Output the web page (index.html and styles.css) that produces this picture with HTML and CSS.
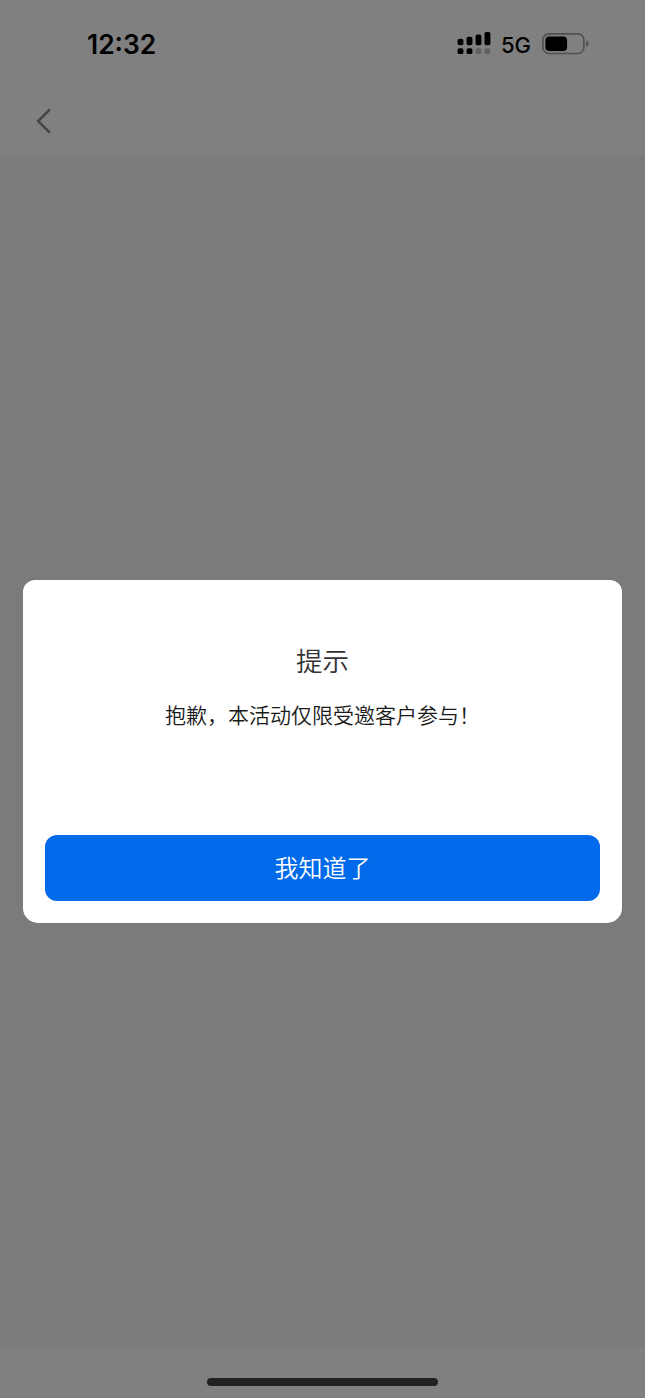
FILE: index.html
```html
<!DOCTYPE html>
<html lang="zh-CN">
<head>
<meta charset="utf-8">
<title>提示</title>
<link rel="stylesheet" href="styles.css">
</head>
<body>
<div class="screen">
  <header class="top">
    <div class="status">
      <span class="time">12:32</span>
      <div class="indicators">
        <svg class="signal" width="34" height="24" viewBox="0 0 34 24">
          <rect x="0.6" y="7.7" width="5.8" height="6.5" rx="1.7"/>
          <rect x="9.6" y="5.7" width="5.8" height="8.5" rx="1.7"/>
          <rect x="18.6" y="3.6" width="5.8" height="10.6" rx="1.7"/>
          <rect x="27.5" y="0.9" width="5.9" height="13.3" rx="1.7"/>
          <rect x="0.6" y="17.2" width="5.8" height="5.9" rx="1.7"/>
          <rect x="9.6" y="17.2" width="5.8" height="5.9" rx="1.7"/>
          <g fill="#626262">
            <rect x="18.6" y="17.2" width="5.8" height="5.9" rx="1.7"/>
            <rect x="27.6" y="17.2" width="5.8" height="5.9" rx="1.7"/>
          </g>
        </svg>
        <span class="network">5G</span>
        <svg class="battery" width="48" height="22" viewBox="0 0 48 22">
          <rect x="0.9" y="0.9" width="41" height="19.6" rx="6" fill="none" stroke="#505050" stroke-width="1.6"/>
          <rect x="3.4" y="3.4" width="21.7" height="14.6" rx="4"/>
          <path d="M44.2 7.6C47.4 8.6 47.4 12.8 44.2 13.8Z" fill="#505050"/>
        </svg>
      </div>
    </div>
    <nav class="nav">
      <svg class="back" width="18" height="28" viewBox="0 0 18 28">
        <path d="M14.2 3.1L3.2 14.1L14.2 25.1" fill="none" stroke="#444" stroke-width="2.5" stroke-linecap="round" stroke-linejoin="miter"/>
      </svg>
    </nav>
  </header>
  <main class="content">
    <section class="dialog" role="dialog">
      <h1 class="title">提示</h1>
      <p class="message">抱歉，本活动仅限受邀客户参与！</p>
      <button class="confirm">我知道了</button>
    </section>
  </main>
  <footer class="bottom"><div class="home"></div></footer>
</div>
</body>
</html>
```
FILE: styles.css
```css
* { box-sizing: border-box; }
body {
  margin: 0;
  font-family: "Noto Sans CJK SC", sans-serif;
}
.screen {
  display: flex;
  flex-direction: column;
  width: 645px;
  height: 1398px;
  background: #7b7b7b;
}
.top {
  height: 155px;
  background: #808080;
}
.status {
  display: flex;
  justify-content: space-between;
  align-items: center;
  height: 88px;
  padding: 0 55px 0 87px;
  font-family: Inter, sans-serif;
  color: #000;
}
.time {
  font-size: 26.4px;
  font-weight: 600;
  line-height: 32px;
}
.indicators {
  display: flex;
  align-items: center;
}
.signal {
  margin-bottom: 2px;
}
.network {
  margin: 2px 11px 0 10px;
  font-size: 22px;
  font-weight: 500;
  line-height: 28px;
}
.nav {
  display: flex;
  align-items: center;
  height: 65px;
  padding-left: 35px;
}
.content {
  flex: 1;
  padding: 425px 23px 0;
}
.dialog {
  display: flex;
  flex-direction: column;
  height: 343px;
  padding: 60px 22px 22px;
  border-radius: 12px 12px 15px 15px;
  background: #fff;
  text-align: center;
}
.title {
  margin: 0;
  font-size: 26.5px;
  font-weight: 350;
  line-height: 40px;
  color: #333;
}
.message {
  margin: 18px 0 0;
  font-size: 21px;
  font-weight: 350;
  line-height: 32px;
  color: #1a1a1a;
}
.confirm {
  height: 66px;
  margin-top: auto;
  padding: 0 0 4px;
  border: 0;
  border-radius: 12px;
  background: #006aea;
  font-family: inherit;
  font-size: 24px;
  font-weight: 350;
  color: #fff;
}
.bottom {
  display: flex;
  justify-content: center;
  height: 51px;
  padding-top: 31px;
  background: #808080;
}
.home {
  width: 231px;
  height: 8px;
  border-radius: 4px;
  background: #222;
}
```
